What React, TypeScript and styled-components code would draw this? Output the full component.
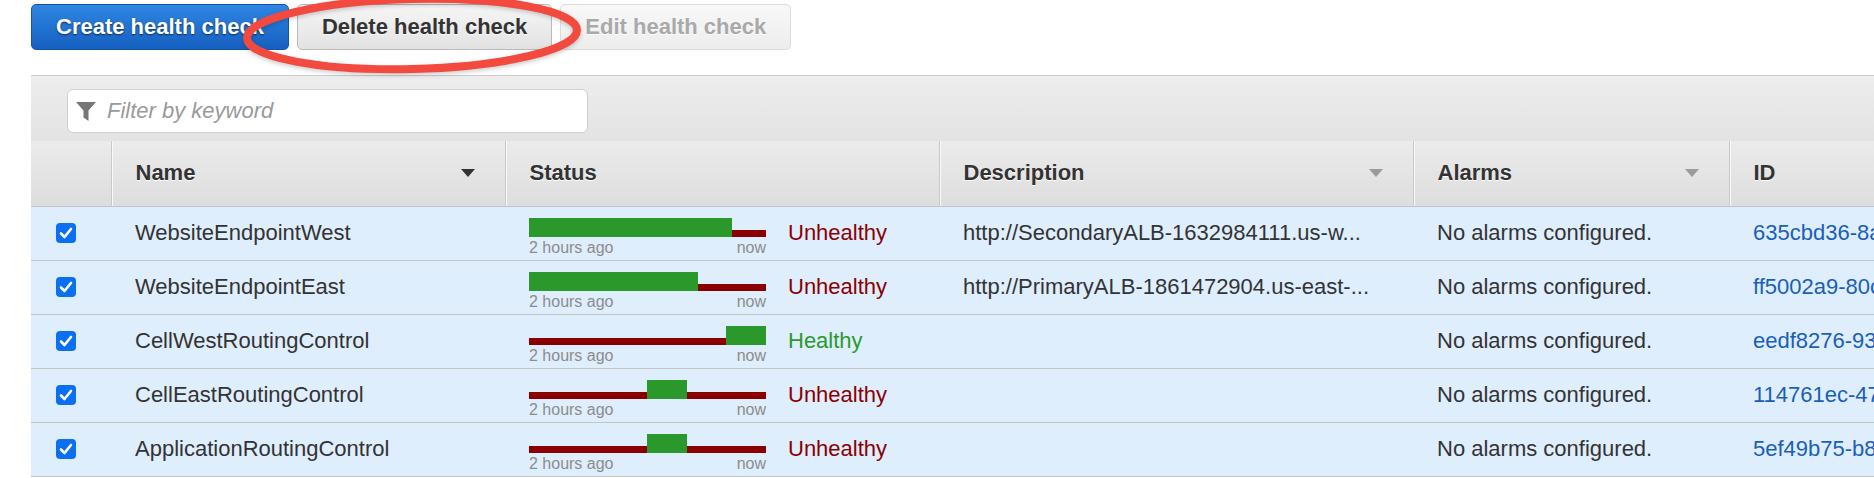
import React from 'react';
import styled, {createGlobalStyle} from 'styled-components';

const GlobalStyle = createGlobalStyle`
  html, body {
    margin: 0;
    padding: 0;
    background: #fff;
    overflow: hidden;
  }
  body {
    font-family: "Liberation Sans", Helvetica, Arial, sans-serif;
    color: #333;
  }
`;

const Page = styled.div`
  position: relative;
  width: 1874px;
  height: 478px;
  overflow: hidden;
`;

const Toolbar = styled.div`
  display: flex;
  gap: 8px;
  padding: 4px 0 0 31px;
`;

type Variant = 'primary' | 'normal' | 'disabled';

const ActionButton = styled.button<{$variant: Variant}>`
  height: 46px;
  padding: 0 24px;
  border-radius: 5px;
  font-family: inherit;
  font-size: 22px;
  font-weight: 700;
  cursor: pointer;
  border: 1px solid ${({$variant}) =>
    $variant === 'primary' ? '#1255a8' : $variant === 'normal' ? '#b9b9b9' : '#dcdcdc'};
  background: ${({$variant}) =>
    $variant === 'primary'
      ? 'linear-gradient(#2f86e2, #1560c0)'
      : $variant === 'normal'
        ? 'linear-gradient(#f6f6f6, #e2e2e2)'
        : 'linear-gradient(#f8f8f8, #ededed)'};
  color: ${({$variant}) =>
    $variant === 'primary' ? '#fff' : $variant === 'normal' ? '#333' : '#a9a9a9'};
  text-shadow: ${({$variant}) =>
    $variant === 'primary' ? '0 1px 2px rgba(0, 0, 0, 0.6)' : '0 1px 0 rgba(255, 255, 255, 0.8)'};
`;

const Panel = styled.div`
  margin: 25px 0 0 31px;
  overflow: hidden;
`;

const FilterBar = styled.div`
  height: 66px;
  border-top: 1px solid #cdcdcd;
  background: linear-gradient(#ededed, #e3e3e3);
  padding: 13px 0 0 36px;
  box-sizing: border-box;
`;

const FilterBox = styled.div`
  display: flex;
  align-items: center;
  gap: 11px;
  width: 521px;
  height: 44px;
  box-sizing: border-box;
  padding-left: 8px;
  background: #fff;
  border: 1px solid #cfcfcf;
  border-radius: 6px;
`;

const FilterText = styled.span`
  font-size: 22px;
  font-style: italic;
  color: #9a9a9a;
`;

const Table = styled.table`
  border-collapse: collapse;
  table-layout: fixed;
  width: 2098px;
`;

const HeadCell = styled.th`
  height: 65px;
  padding: 0 30px 0 24px;
  box-sizing: border-box;
  text-align: left;
  font-size: 22px;
  font-weight: 700;
  color: #333;
  text-shadow: 0 1px 0 #fff;
  background: linear-gradient(#ebebeb, #dddddd);
  border-left: 1px solid #c9c9c9;
  box-shadow: inset 1px 0 0 #f9f9f9;
  border-bottom: 1px solid #c4c4c4;

  &:first-child {
    border-left: none;
    box-shadow: none;
  }
`;

const HeadInner = styled.div`
  display: flex;
  align-items: center;
  justify-content: space-between;
`;

const Caret = styled.span<{$dark?: boolean}>`
  width: 0;
  height: 0;
  border-left: 7px solid transparent;
  border-right: 7px solid transparent;
  border-top: 8px solid ${({$dark}) => ($dark ? '#333' : '#9b9b9b')};
`;

const Row = styled.tr`
  background: #dfeefd;
  border-bottom: 1px solid #c4c4c4;
`;

const Cell = styled.td<{$link?: boolean}>`
  height: 53px;
  padding: 0 24px;
  box-sizing: border-box;
  font-size: 22px;
  color: ${({$link}) => ($link ? '#1a5fb8' : '#333')};
  white-space: nowrap;
  overflow: hidden;
`;

const CheckCell = styled.td`
  height: 53px;
  padding: 0 0 0 25px;
`;

const Checkbox = styled.span`
  display: flex;
  align-items: center;
  justify-content: center;
  width: 20px;
  height: 20px;
  border-radius: 4px;
  background: #0b6ff2;
`;

const StatusCell = styled.td`
  height: 53px;
  padding: 0 0 0 24px;
  vertical-align: top;
`;

const StatusWrap = styled.div`
  display: flex;
  align-items: center;
  gap: 22px;
  height: 53px;
`;

const Timeline = styled.div`
  align-self: flex-start;
  margin-top: 11px;
  width: 237px;
`;

const Track = styled.div`
  position: relative;
  height: 19px;
`;

const RedLine = styled.div`
  position: absolute;
  left: 0;
  right: 0;
  bottom: 0;
  height: 7px;
  background: #8a0000;
`;

const GreenBlock = styled.div`
  position: absolute;
  top: 0;
  bottom: 0;
  background: #2a982b;
`;

const TimeLabels = styled.div`
  display: flex;
  justify-content: space-between;
  margin-top: 3px;
  font-size: 16px;
  line-height: 16px;
  color: #8c8c8c;
`;

const StatusText = styled.span<{$ok: boolean}>`
  font-size: 22px;
  color: ${({$ok}) => ($ok ? '#2a9a2a' : '#8a0000')};
`;

const Annotation = styled.svg`
  position: absolute;
  left: 230px;
  top: -20px;
  overflow: visible;
  filter: drop-shadow(0 2px 2px rgba(0, 0, 0, 0.2));
  pointer-events: none;
`;

const FunnelIcon = () => (
  <svg width="20" height="19" viewBox="0 0 20 19">
    <path d="M0 0 H20 L12.5 8.5 V19 L7.5 15.5 V8.5 Z" fill="#777"/>
  </svg>
);

const CheckMark = () => (
  <svg width="14" height="12" viewBox="0 0 14 12">
    <path d="M2 6.5 L5.5 10 L12 2" fill="none" stroke="#fff" strokeWidth="2.6" strokeLinecap="round" strokeLinejoin="round"/>
  </svg>
);

type Check = {
  name: string;
  from: number;
  to: number;
  healthy: boolean;
  description: string;
  id: string;
};

const checks: Check[] = [
  {name: 'WebsiteEndpointWest', from: 0, to: 85.7, healthy: false, description: 'http://SecondaryALB-1632984111.us-w...', id: '635cbd36-8a1e-4f9b-b8d2-3c7a9e1f0b44'},
  {name: 'WebsiteEndpointEast', from: 0, to: 71.3, healthy: false, description: 'http://PrimaryALB-1861472904.us-east-...', id: 'ff5002a9-80c4-4b1e-9d3f-72a1c6e8d915'},
  {name: 'CellWestRoutingControl', from: 83, to: 100, healthy: true, description: '', id: 'eedf8276-9372-41ad-a0c5-5e8b2f4d7c63'},
  {name: 'CellEastRoutingControl', from: 49.8, to: 66.7, healthy: false, description: '', id: '114761ec-4715-4c2e-8f9a-d0b3e6a15c28'},
  {name: 'ApplicationRoutingControl', from: 49.8, to: 66.7, healthy: false, description: '', id: '5ef49b75-b86d-4e07-93a2-1fc5d8b4e6a9'},
];

const columns = [80, 394, 434, 474, 316, 400];

export default function App() {
  return (
    <Page>
      <GlobalStyle/>
      <Toolbar>
        <ActionButton $variant="primary">Create health check</ActionButton>
        <ActionButton $variant="normal">Delete health check</ActionButton>
        <ActionButton $variant="disabled">Edit health check</ActionButton>
      </Toolbar>

      <Panel>
        <FilterBar>
          <FilterBox>
            <FunnelIcon/>
            <FilterText>Filter by keyword</FilterText>
          </FilterBox>
        </FilterBar>
        <Table>
          <colgroup>
            {columns.map((w, i) => <col key={i} style={{width: w}}/>)}
          </colgroup>
          <thead>
            <tr>
              <HeadCell/>
              <HeadCell><HeadInner>Name<Caret $dark/></HeadInner></HeadCell>
              <HeadCell><HeadInner>Status</HeadInner></HeadCell>
              <HeadCell><HeadInner>Description<Caret/></HeadInner></HeadCell>
              <HeadCell><HeadInner>Alarms<Caret/></HeadInner></HeadCell>
              <HeadCell><HeadInner>ID</HeadInner></HeadCell>
            </tr>
          </thead>
          <tbody>
            {checks.map((c) => (
              <Row key={c.id}>
                <CheckCell>
                  <Checkbox><CheckMark/></Checkbox>
                </CheckCell>
                <Cell>{c.name}</Cell>
                <StatusCell>
                  <StatusWrap>
                    <Timeline>
                      <Track>
                        <RedLine/>
                        <GreenBlock style={{left: `${c.from}%`, width: `${c.to - c.from}%`}}/>
                      </Track>
                      <TimeLabels>
                        <span>2 hours ago</span>
                        <span>now</span>
                      </TimeLabels>
                    </Timeline>
                    <StatusText $ok={c.healthy}>{c.healthy ? 'Healthy' : 'Unhealthy'}</StatusText>
                  </StatusWrap>
                </StatusCell>
                <Cell>{c.description}</Cell>
                <Cell>No alarms configured.</Cell>
                <Cell $link>{c.id}</Cell>
              </Row>
            ))}
          </tbody>
        </Table>
      </Panel>

      <Annotation width="370" height="100" viewBox="0 0 370 100">
        <ellipse cx="182" cy="54" rx="165" ry="35" transform="rotate(-1.4 182 54)"
                 fill="none" stroke="#f24a3e" strokeWidth="8"/>
      </Annotation>
    </Page>
  );
}
